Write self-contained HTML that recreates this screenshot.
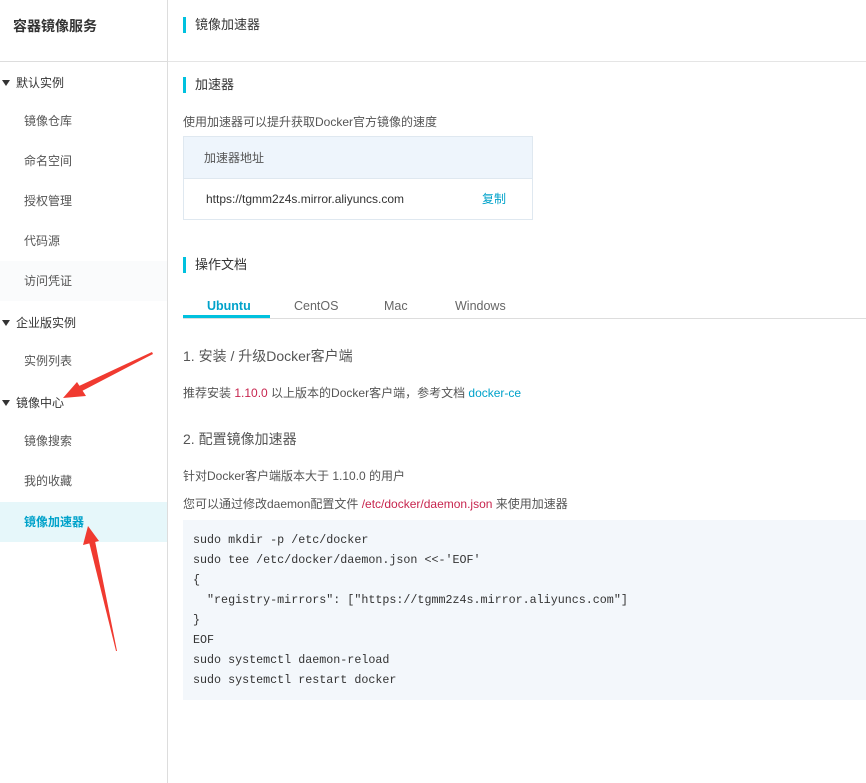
<!DOCTYPE html>
<html><head><meta charset="utf-8"><style>
*{margin:0;padding:0;box-sizing:border-box}
body{width:866px;height:783px;background:#fff;font-family:"Liberation Sans","Noto Sans CJK SC",sans-serif;color:#333;position:relative;overflow:hidden;font-size:12px}
.side{position:absolute;left:0;top:0;width:168px;height:783px;border-right:1px solid #ddd;background:#fff}
.side .title{height:62px;border-bottom:1px solid #ddd;font-size:14px;font-weight:bold;line-height:52px;padding-left:13px;color:#333}
.side .grp{position:absolute;left:0;font-size:12px;color:#333}
.side .grp:before{content:"";display:inline-block;border-left:4px solid transparent;border-right:4px solid transparent;border-top:6px solid #333;margin:0 6px 1px 2px;vertical-align:middle}
.side .it{position:absolute;left:0;width:167px;height:40px;line-height:40px;padding-left:24px;font-size:12px;color:#555}
.abs{position:absolute}
.h{position:absolute;left:183px;border-left:3px solid #00c1de;padding-left:9px;font-size:13px;line-height:16px;color:#333}
.code{position:absolute;left:183px;top:520px;width:683px;height:180px;background:#f3f7fb;font-family:"Liberation Mono",monospace;font-size:11.7px;line-height:20px;padding:10px 0 0 10px;color:#333;white-space:pre}
</style></head><body>
<div class="side">
<div class="title">容器镜像服务</div>
<div class="grp" style="top:74px">默认实例</div>
<div class="it" style="top:101px">镜像仓库</div>
<div class="it" style="top:141px">命名空间</div>
<div class="it" style="top:181px">授权管理</div>
<div class="it" style="top:221px">代码源</div>
<div class="it" style="top:261px;background:#fafbfc">访问凭证</div>
<div class="grp" style="top:314px">企业版实例</div>
<div class="it" style="top:341px">实例列表</div>
<div class="grp" style="top:394px">镜像中心</div>
<div class="it" style="top:421px">镜像搜索</div>
<div class="it" style="top:461px">我的收藏</div>
<div class="it" style="top:502px;background:#e6f7fa;color:#00a2ca;font-weight:bold">镜像加速器</div>
</div>
<div class="abs" style="left:168px;top:61px;width:698px;border-top:1px solid #e5e5e5"></div>
<div class="h" style="top:17px">镜像加速器</div>
<div class="h" style="top:77px">加速器</div>
<div class="abs" style="left:183px;top:113px;font-size:12px;color:#555">使用加速器可以提升获取Docker官方镜像的速度</div>
<div class="abs" style="left:183px;top:136px;width:350px;height:84px;border:1px solid #dfe8f0">
<div style="height:42px;background:#eef5fc;border-bottom:1px solid #dfe8f0;line-height:42px;padding-left:20px;color:#555">加速器地址</div>
<div style="line-height:40px;padding-left:22px;color:#333">https://tgmm2z4s.mirror.aliyuncs.com<span style="position:absolute;left:298px;color:#00a2ca">复制</span></div>
</div>
<div class="h" style="top:257px">操作文档</div>
<div class="abs" style="left:183px;top:318px;width:683px;border-top:1px solid #ddd"></div>
<div class="abs" style="left:183px;top:315px;width:87px;height:3px;background:#00c1de"></div>
<div class="abs" style="left:207px;top:299px;font-size:12.5px;color:#00a2ca;font-weight:bold">Ubuntu</div>
<div class="abs" style="left:294px;top:299px;font-size:12.5px;color:#666">CentOS</div>
<div class="abs" style="left:384px;top:299px;font-size:12.5px;color:#666">Mac</div>
<div class="abs" style="left:455px;top:299px;font-size:12.5px;color:#666">Windows</div>
<div class="abs" style="left:183px;top:346px;font-size:14px;color:#555">1. 安装 / 升级Docker客户端</div>
<div class="abs" style="left:183px;top:384px;color:#555">推荐安装 <span style="color:#c7254e">1.10.0</span> 以上版本的Docker客户端，参考文档 <span style="color:#00a2ca">docker-ce</span></div>
<div class="abs" style="left:183px;top:429px;font-size:14px;color:#555">2. 配置镜像加速器</div>
<div class="abs" style="left:183px;top:467px;color:#555">针对Docker客户端版本大于 1.10.0 的用户</div>
<div class="abs" style="left:183px;top:495px;color:#555">您可以通过修改daemon配置文件 <span style="color:#c7254e">/etc/docker/daemon.json</span> 来使用加速器</div>
<div class="code">sudo mkdir -p /etc/docker
sudo tee /etc/docker/daemon.json &lt;&lt;-'EOF'
{
  "registry-mirrors": ["https://tgmm2z4s.mirror.aliyuncs.com"]
}
EOF
sudo systemctl daemon-reload
sudo systemctl restart docker</div>
<svg class="abs" style="left:0;top:0" width="866" height="783">
<polygon points="152,352 153,354 82,391 79,386" fill="#f03a30"/>
<polygon points="63,398 77,382 86,396" fill="#f03a30"/>
<polygon points="117,651 116,651 89,542 95,541" fill="#f03a30"/>
<polygon points="88,526 83,545 99,541" fill="#f03a30"/>
</svg>
</body></html>
